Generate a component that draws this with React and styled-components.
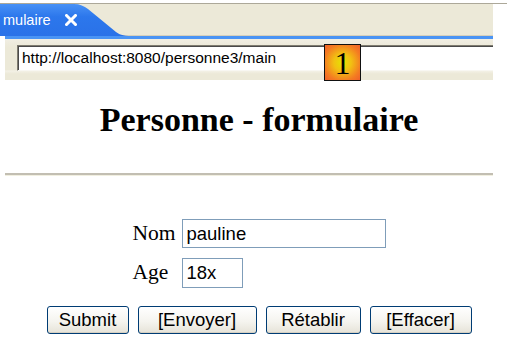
import styled, { createGlobalStyle } from "styled-components";

const GlobalStyle = createGlobalStyle`
  html, body {
    margin: 0;
    padding: 0;
    background: #fff;
    overflow: hidden;
  }
`;

const Page = styled.div`
  position: relative;
  width: 507px;
  height: 351px;
  overflow: hidden;
  background: #fff;
  font-family: "Liberation Serif", serif;
`;

const TopBar = styled.div`
  width: 507px;
  margin-top: 3px;
  border-top: 1px solid #aca899;
`;

const TabStrip = styled.div`
  width: 493px;
  height: 32px;
  display: flex;
  align-items: stretch;
  background: #ece9d8;
  box-shadow: inset 0 -1px 0 #d6d0bc;
`;

const Tab = styled.div`
  flex: 0 0 132px;
  display: flex;
  align-items: center;
  gap: 14px;
  padding-left: 3px;
  box-sizing: border-box;
  clip-path: path("M0 0 H74 C80 0 84 2 88 5 L116 28 C119 30 122 32 132 32 H0 Z");
  background: linear-gradient(#4891f6, #2c77ec 40%, #2a72e8);
  color: #fff;
  font-family: "Liberation Sans", Arial, sans-serif;
  font-size: 14.5px;
`;

const BlueLine = styled.div`
  margin-left: 5px;
  width: 488px;
  height: 3px;
  background: #4a94f4;
`;

const Toolbar = styled.div`
  margin-left: 5px;
  width: 488px;
  height: 41px;
  box-sizing: border-box;
  padding: 6px 0 0 12px;
  overflow: hidden;
  background: linear-gradient(#f1eee3, #ece9d8 20%, #ece9d8 75%, #f3f1e6 78%, #ece9d8 85%);
`;

const Address = styled.div`
  width: 500px;
  height: 26px;
  box-sizing: border-box;
  display: flex;
  align-items: center;
  padding-left: 4px;
  border: 1px solid;
  border-color: #7f7c70 #f8f7f2 #f8f7f2 #7f7c70;
  box-shadow: inset 1px 1px 0 #4a4a4a;
  background: #fff;
  color: #000;
  font-family: "Liberation Sans", Arial, sans-serif;
  font-size: 15.5px;
`;

const Badge = styled.div`
  position: absolute;
  left: 324px;
  top: 44px;
  width: 37px;
  height: 37px;
  box-sizing: border-box;
  display: flex;
  align-items: center;
  justify-content: center;
  border: 1px solid #111;
  background: radial-gradient(circle at 50% 50%, #e4e400 0%, #f2c012 35%, #f47a22 75%, #f0602a 100%);
  font-family: "Liberation Serif", serif;
  font-size: 32px;
  line-height: 1;
  color: #000;
`;

const Content = styled.div`
  margin-left: 5px;
  width: 508px;
`;

const Title = styled.h1`
  margin: 19.5px 0 0;
  text-align: center;
  font-family: "Liberation Serif", serif;
  font-weight: bold;
  font-size: 34px;
  line-height: 40px;
  color: #000;
`;

const Rule = styled.hr`
  width: 488px;
  height: 0;
  margin: 33.5px 0 0;
  border: 0;
  border-top: 2px solid #c2beb2;
  border-bottom: 1px solid #f1efe0;
`;

const Form = styled.div`
  width: max-content;
  margin: 43px auto 0;
  display: grid;
  grid-template-columns: auto auto;
  column-gap: 6px;
  row-gap: 10px;
  align-items: baseline;
  justify-items: start;
`;

const Label = styled.span`
  font-family: "Liberation Serif", serif;
  font-size: 21.5px;
  color: #000;
`;

const Field = styled.input`
  width: ${({ $w }) => $w}px;
  height: ${({ $h }) => $h}px;
  box-sizing: border-box;
  padding: 0 4px;
  border: 1px solid #7f9db9;
  background: #fff;
  color: #000;
  font-family: "Liberation Sans", Arial, sans-serif;
  font-size: 18.5px;
  outline: none;
`;

const Buttons = styled.div`
  margin-top: 18px;
  display: flex;
  justify-content: center;
  gap: 9px;
`;

const Button = styled.button`
  width: ${({ $w }) => $w}px;
  height: 28px;
  padding: 0;
  border: 1px solid #003c74;
  border-radius: 3px;
  background: linear-gradient(#ffffff, #f5f4ef 55%, #e6e3d8);
  box-shadow: inset 0 -1px 0 #d6d0c2;
  color: #000;
  font-family: "Liberation Sans", Arial, sans-serif;
  font-size: 18.5px;
`;

const CloseIcon = () => (
  <svg width="12" height="12" viewBox="0 0 12 12">
    <path d="M1.5 1.5 L10.5 10.5 M10.5 1.5 L1.5 10.5" stroke="#fff" strokeWidth="3" strokeLinecap="square" />
  </svg>
);

const buttons = [
  { label: "Submit", w: 82 },
  { label: "[Envoyer]", w: 119 },
  { label: "Rétablir", w: 95 },
  { label: "[Effacer]", w: 102 },
];

const App = () => (
  <Page>
    <GlobalStyle />
    <TopBar>
      <TabStrip>
        <Tab>
          <span>mulaire</span>
          <CloseIcon />
        </Tab>
      </TabStrip>
    </TopBar>
    <BlueLine />
    <Toolbar>
      <Address>http://localhost:8080/personne3/main</Address>
    </Toolbar>
    <Badge>1</Badge>
    <Content>
      <Title>Personne - formulaire</Title>
      <Rule />
      <Form>
        <Label>Nom</Label>
        <Field $w={204} $h={29} value="pauline" readOnly />
        <Label>Age</Label>
        <Field $w={61} $h={30} value="18x" readOnly />
      </Form>
      <Buttons>
        {buttons.map(({ label, w }) => (
          <Button key={label} $w={w}>
            {label}
          </Button>
        ))}
      </Buttons>
    </Content>
  </Page>
);

export default App;
